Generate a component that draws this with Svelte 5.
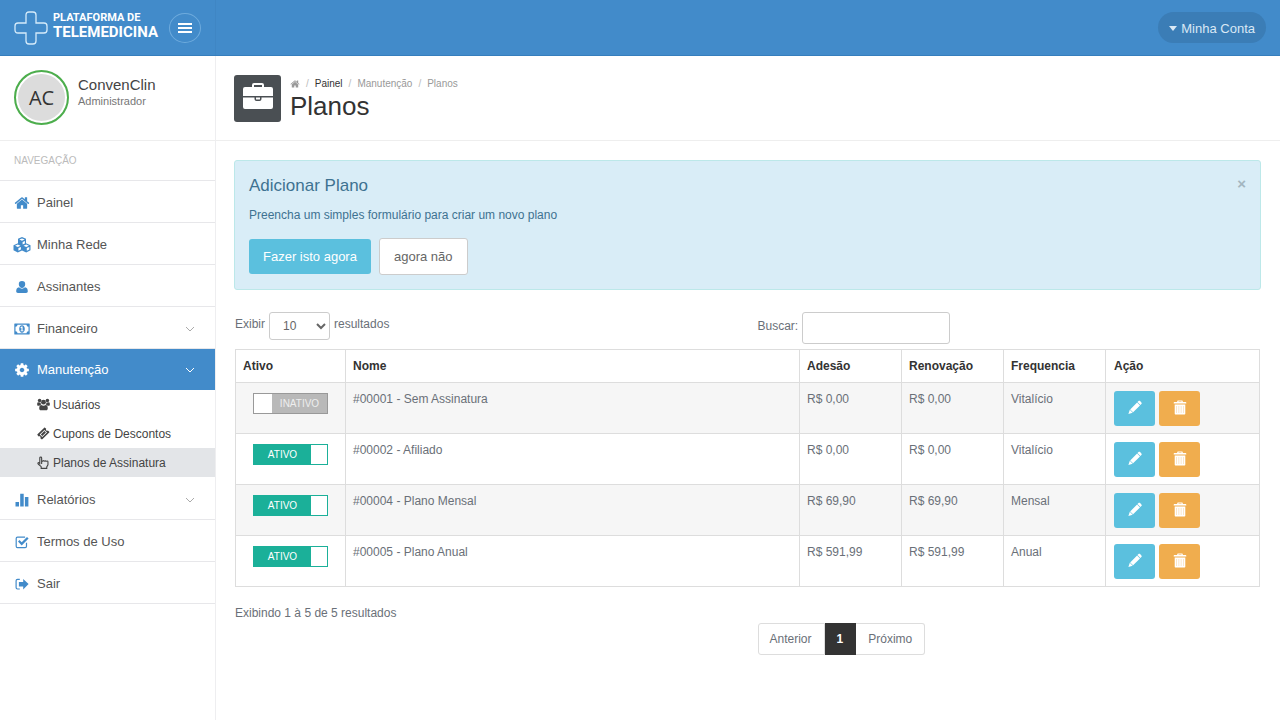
<script lang="ts">
    type Plan = {
        code: string;
        name: string;
        fee: string;
        renewal: string;
        frequency: string;
        active: boolean;
    };

    let plans: Plan[] = $state([
        { code: '#00001', name: 'Sem Assinatura', fee: 'R$ 0,00', renewal: 'R$ 0,00', frequency: 'Vitalício', active: false },
        { code: '#00002', name: 'Afiliado', fee: 'R$ 0,00', renewal: 'R$ 0,00', frequency: 'Vitalício', active: true },
        { code: '#00004', name: 'Plano Mensal', fee: 'R$ 69,90', renewal: 'R$ 69,90', frequency: 'Mensal', active: true },
        { code: '#00005', name: 'Plano Anual', fee: 'R$ 591,99', renewal: 'R$ 591,99', frequency: 'Anual', active: true }
    ]);

    const menu = [
        { label: 'Painel', icon: 'home' },
        { label: 'Minha Rede', icon: 'cubes' },
        { label: 'Assinantes', icon: 'user' },
        { label: 'Financeiro', icon: 'money', more: true },
        {
            label: 'Manutenção',
            icon: 'gear',
            more: true,
            active: true,
            children: [
                { label: 'Usuários', icon: 'users' },
                { label: 'Cupons de Descontos', icon: 'ticket' },
                { label: 'Planos de Assinatura', icon: 'hand', current: true }
            ]
        },
        { label: 'Relatórios', icon: 'chart', more: true },
        { label: 'Termos de Uso', icon: 'check' },
        { label: 'Sair', icon: 'exit' }
    ];

    let showAlert = $state(true);
    let pageSize = $state('10');
    let search = $state('');
</script>

{#snippet icon(name: string)}
    {#if name === 'home'}
        <svg viewBox="0 0 1792 1792" class="icon large"><path d="M1472 992v480q0 26-19 45t-45 19h-384v-384h-256v384h-384q-26 0-45-19t-19-45v-480q0-1 .5-3t.5-3l575-474 575 474q1 2 1 6zm223-69l-62 74q-8 9-21 11h-3q-13 0-21-7l-692-577-692 577q-12 8-24 7-13-2-21-11l-62-74q-8-10-7-23.5t11-21.5l719-599q32-26 76-26t76 26l244 204v-195q0-14 9-23t23-9h192q14 0 23 9t9 23v408l219 182q10 8 11 21.5t-7 23.5z" /></svg>
    {:else if name === 'cubes'}
        <svg viewBox="0 0 18 16" class="icon cubes">
            <path fill-rule="evenodd" d="M9 0l4 1.700v4.600l4.500 1.900v5L13.200 15.500 9 13.600l-4.200 1.900L.5 13.200v-5L5 6.300V1.700zM9 1.500L6.300 2.600 9 3.800l2.700-1.200zM9.600 5v2.600l2.300-1V3.900zM4.800 7.600L2.100 8.700l2.700 1.200 2.700-1.200zM5.400 11v2.800l2.500-1.200V9.900zM13.200 7.600l-2.700 1.100 2.700 1.200 2.700-1.200zM13.800 11v2.800l2.500-1.200V9.900z" />
        </svg>
    {:else if name === 'user'}
        <svg viewBox="0 0 14 14" class="icon"><path d="M7 1a3.200 3.200 0 0 1 3.200 3.300C10.200 6.300 8.800 8 7 8S3.800 6.300 3.800 4.300A3.200 3.200 0 0 1 7 1zM4 7.300a4.300 4.300 0 0 0 6 0c2 .2 2.800 2 2.800 4 0 1.100-.7 1.700-1.700 1.700H2.900c-1 0-1.700-.6-1.700-1.700 0-2 .8-3.800 2.800-4z" /></svg>
    {:else if name === 'money'}
        <svg viewBox="0 0 16 12" class="icon large">
            <path fill-rule="evenodd" d="M.8.5h14.400c.3 0 .5.200.5.500v10c0 .3-.2.500-.5.500H.8A.5.500 0 0 1 .3 11V1C.3.700.5.500.8.500zM3.500 1.700A2 2 0 0 1 1.500 3.700v4.600a2 2 0 0 1 2 2h9a2 2 0 0 1 2-2V3.700a2 2 0 0 1-2-2z" />
            <path fill-rule="evenodd" d="M8 2.300c1.700 0 2.800 1.700 2.800 3.700S9.700 9.700 8 9.700 5.200 8 5.200 6 6.300 2.300 8 2.300zm-.5 1.300L6.300 4.700l.5.600.6-.4v2.500h-.9v.9h3v-.9h-.9V3.600z" />
        </svg>
    {:else if name === 'gear'}
        <svg viewBox="0 0 1792 1792" class="icon large"><path d="M1152 896q0-106-75-181t-181-75-181 75-75 181 75 181 181 75 181-75 75-181zm512-109v222q0 12-8 23t-20 13l-185 28q-19 54-39 91 35 50 107 138 10 12 10 25t-9 23q-27 37-99 108t-94 71q-12 0-26-9l-138-108q-44 23-91 38-16 136-29 186-7 28-36 28h-222q-14 0-24.500-8.500t-11.500-21.500l-28-184q-49-16-90-37l-141 107q-10 9-25 9-14 0-25-11-126-114-165-168-7-10-7-23 0-12 8-23 15-21 51-66.500t54-70.500q-27-50-41-99l-183-27q-13-2-21-12.500t-8-23.500v-222q0-12 8-23t19-13l186-28q14-46 39-92-40-57-107-138-10-12-10-24 0-10 9-23 26-36 98.500-107.500t94.500-71.500q13 0 26 10l138 107q44-23 91-38 16-136 29-186 7-28 36-28h222q14 0 24.500 8.500t11.500 21.500l28 184q49 16 90 37l142-107q9-9 24-9 13 0 25 10 129 119 165 170 7 8 7 22 0 12-8 23-15 21-51 66.500t-54 70.500q26 50 41 98l183 28q13 2 21 12.500t8 23.500z" /></svg>
    {:else if name === 'users'}
        <svg viewBox="0 0 14 13" class="icon">
            <circle cx="2.800" cy="2.200" r="1.900" /><circle cx="11.200" cy="2.200" r="1.900" /><circle cx="7" cy="4" r="2.600" />
            <path d="M.2 5.800C.2 4.700.6 4 1.500 4c.8.500 1.700.500 2.300.300 0 1 .4 1.700.9 2.400-1 0-1.700.500-2.200 1.200H1.400C.6 7.900.2 7.400.2 6.800zM13.800 5.800c0-1.100-.4-1.800-1.300-1.800-.8.500-1.700.500-2.300.300 0 1-.4 1.700-.9 2.400 1 0 1.700.500 2.200 1.200h1.100c.8 0 1.200-.5 1.200-1.100zM4.600 7c1.400 1 3.400 1 4.800 0 1.500 0 2.200 1.700 2.200 3.700 0 1.200-.7 1.900-1.800 1.900H4.200c-1.100 0-1.800-.7-1.800-1.900 0-2 .7-3.700 2.200-3.700z" />
        </svg>
    {:else if name === 'ticket'}
        <svg viewBox="0 0 14 14" class="icon"><path fill-rule="evenodd" d="M8.600.8l1.300 1.200c-.4.600-.3 1.200.1 1.700s1.200.6 1.700.2l1.500 1.300c.2.300.2.600 0 .8l-7.500 7.200c-.3.200-.6.200-.8 0L3.600 12c.4-.6.300-1.200-.1-1.700S2.300 9.700 1.700 10.100L.5 8.700c-.2-.3-.2-.6 0-.8L7.800.8c.2-.2.600-.2.800 0zM8 3.100L2.900 8.200l2.800 2.700 5.100-5.100zM8 4.300l1.600 1.500-3.900 3.900-1.600-1.500z" /></svg>
    {:else if name === 'hand'}
        <svg viewBox="0 0 13 14" class="icon outline"><path d="M4.500 8.500V2.100c0-1.300-2-1.300-2 0V8l-.8-.7C.9 6.700 0 7.700.8 8.600L4 11.500v1.800h6v-1.600l1.300-2.200V6.300c0-1.100-1.700-1.100-1.900-.2-.1-1-1.600-1.200-1.900-.2-.2-1-1.500-1.200-1.800-.3H4.500" /></svg>
    {:else if name === 'chart'}
        <svg viewBox="0 0 14 14" class="icon"><path d="M.5 9h3.500v4.500H.5zM5.200.7h3.500v12.800H5.200zM9.900 4h3.500v9.500H9.900z" /></svg>
    {:else if name === 'check'}
        <svg viewBox="0 0 14 14" class="icon"><path d="M11.500 7.800v3.500c0 .8-.5 1.300-1.300 1.300H2.500c-.8 0-1.300-.5-1.300-1.300V3.500c0-.8.500-1.300 1.300-1.300h7.600" fill="none" stroke="currentColor" stroke-width="1.200" /><path d="M3 6.600l1.500-1.500 2.200 2.200L12 1.900l1.600 1.600-6.900 6.900z" /></svg>
    {:else if name === 'exit'}
        <svg viewBox="0 0 14 14" class="icon"><path d="M4.800 12H2.500c-.8 0-1.400-.6-1.400-1.400V3.700c0-.8.600-1.400 1.400-1.400h2.300" fill="none" stroke="currentColor" stroke-width="1.200" /><path d="M8.200 1.900L13.600 7.100l-5.400 5.300V9.400H3.900V4.900h4.300z" /></svg>
    {:else if name === 'pencil'}
        <svg viewBox="0 0 14 14" class="glyph"><path d="M10.500.6c.5-.5 1.100-.5 1.600 0l1.300 1.300c.5.500.5 1.100 0 1.600l-1 1-2.900-2.900zM9.100 2L12 4.900l-6.900 6.900-2.900-2.900zM1.800 9.300l2.900 2.900-4.300 1.400z" /></svg>
    {:else if name === 'trash'}
        <svg viewBox="0 0 14 15" class="glyph"><path fill-rule="evenodd" d="M5.200.5h3.600c.6 0 1 .4 1 1V2h2.800c.4 0 .7.300.7.700v.9H.7v-.9c0-.4.300-.7.700-.7h2.800v-.5c0-.6.400-1 1-1zm.3 1V2h3v-.5zM1.700 4.500h10.600v9c0 .7-.4 1-1 1H2.700c-.6 0-1-.3-1-1zM3.700 6v7h.3V6zM5.800 6v7h.3V6zM7.900 6v7h.3V6zM10 6v7h.3V6z" /></svg>
    {/if}
{/snippet}

<header class="topbar">
    <div class="brand">
        <a href="#inicio" class="logo">
            <svg viewBox="0 0 34 34" width="34" height="34">
                <path d="M12 4q0-3 3-3h4q3 0 3 3v8h8q3 0 3 3v4q0 3-3 3h-8v8q0 3-3 3h-4q-3 0-3-3v-8H4q-3 0-3-3v-4q0-3 3-3h8z" fill="none" stroke="#d5ebfa" stroke-width="1.300" />
            </svg>
            <span class="logo-text">
                <small>PLATAFORMA DE</small>
                <strong>TELEMEDICINA</strong>
            </span>
        </a>
        <button class="toggle-menu" aria-label="Menu">
            <svg viewBox="0 0 14 12" width="14" height="12"><path d="M0 2h14M0 6h14M0 10h14" stroke="#fff" stroke-width="2" /></svg>
        </button>
    </div>
    <button class="account"><span class="caret"></span>Minha Conta</button>
</header>

<div class="layout">
    <aside class="sidebar">
        <div class="profile">
            <span class="avatar">AC</span>
            <div>
                <div class="profile-name">ConvenClin</div>
                <div class="profile-role">Administrador</div>
            </div>
        </div>
        <h5 class="nav-title">NAVEGAÇÃO</h5>
        <nav>
            {#each menu as item}
                <a href="#{item.icon}" class="nav-item" class:active={item.active}>
                    <span class="nav-icon">{@render icon(item.icon)}</span>
                    <span class="nav-label">{item.label}</span>
                    {#if item.more}
                        <svg viewBox="0 0 8 6" class="chevron"><path d="M0 1l4 4 4-4" fill="none" stroke="currentColor" /></svg>
                    {/if}
                </a>
                {#if item.children}
                    <div class="sub-menu">
                        {#each item.children as child}
                            <a href="#{child.icon}" class="sub-item" class:current={child.current}>
                                {@render icon(child.icon)}{child.label}
                            </a>
                        {/each}
                    </div>
                {/if}
            {/each}
        </nav>
    </aside>

    <main>
        <div class="page-header">
            <span class="page-icon">
                <svg viewBox="0 0 32 28" width="32" height="28">
                    <path fill-rule="evenodd" fill="#fff" d="M10 5V3q0-2 2-2h8q2 0 2 2v2h7q2 0 2 2v7H1V7q0-2 2-2zM12 5h8V3h-8z" />
                    <path fill="#fff" d="M1 15.500h11.500V17q0 2 2 2h3q2 0 2-2v-1.500H31V25q0 2-2 2H3q-2 0-2-2zM14 15.500h4V17q0 .6-.6.600h-2.800q-.6 0-.6-.6z" />
                </svg>
            </span>
            <div>
                <ol class="breadcrumb">
                    <li>{@render icon('home')}</li>
                    <li><a href="#painel">Painel</a></li>
                    <li>Manutenção</li>
                    <li>Planos</li>
                </ol>
                <h1>Planos</h1>
            </div>
        </div>

        <div class="content">
            {#if showAlert}
                <section class="alert">
                    <button class="close" aria-label="Fechar" onclick={() => (showAlert = false)}>×</button>
                    <h4>Adicionar Plano</h4>
                    <p>Preencha um simples formulário para criar um novo plano</p>
                    <div class="alert-actions">
                        <button class="btn info">Fazer isto agora</button>
                        <button class="btn plain" onclick={() => (showAlert = false)}>agora não</button>
                    </div>
                </section>
            {/if}

            <div class="table-area">
                <div class="split controls">
                    <label class="length">
                        Exibir
                        <select bind:value={pageSize}>
                            <option>10</option>
                            <option>25</option>
                            <option>50</option>
                        </select>
                        resultados
                    </label>
                    <label class="search">Buscar: <input type="search" bind:value={search} /></label>
                </div>

                <table>
                    <colgroup>
                        <col class="col-active" />
                        <col />
                        <col class="col-value" />
                        <col class="col-value" />
                        <col class="col-value" />
                        <col class="col-action" />
                    </colgroup>
                    <thead>
                        <tr>
                            <th>Ativo</th>
                            <th>Nome</th>
                            <th>Adesão</th>
                            <th>Renovação</th>
                            <th>Frequencia</th>
                            <th>Ação</th>
                        </tr>
                    </thead>
                    <tbody>
                        {#each plans as plan}
                            <tr>
                                <td>
                                    <label class="switch" class:on={plan.active}>
                                        <input type="checkbox" bind:checked={plan.active} />
                                        <span>{plan.active ? 'ATIVO' : 'INATIVO'}</span>
                                    </label>
                                </td>
                                <td>{plan.code} - {plan.name}</td>
                                <td>{plan.fee}</td>
                                <td>{plan.renewal}</td>
                                <td>{plan.frequency}</td>
                                <td>
                                    <div class="row-actions">
                                        <button class="btn square info" aria-label="Editar">{@render icon('pencil')}</button>
                                        <button class="btn square warning" aria-label="Excluir">{@render icon('trash')}</button>
                                    </div>
                                </td>
                            </tr>
                        {/each}
                    </tbody>
                </table>

                <div class="split footer">
                    <div>Exibindo 1 à 5 de 5 resultados</div>
                    <ul class="pagination">
                        <li><a href="#anterior">Anterior</a></li>
                        <li><a href="#1" class="selected">1</a></li>
                        <li><a href="#proximo">Próximo</a></li>
                    </ul>
                </div>
            </div>
        </div>
    </main>
</div>

<style>
    :global(body) {
        margin: 0;
        background: #fff;
        color: #6a7078;
        font-family: 'Liberation Sans', Arial, sans-serif;
        font-size: 12px;
        line-height: 20px;
    }

    * {
        box-sizing: border-box;
    }

    a {
        color: inherit;
        text-decoration: none;
    }

    button,
    input,
    select {
        font: inherit;
    }

    .icon {
        width: 14px;
        height: 14px;
        fill: currentColor;
        flex: none;
    }

    .icon.large {
        width: 16px;
        height: 16px;
    }

    .icon.cubes {
        width: 18px;
        height: 16px;
    }

    .icon.outline {
        fill: none;
        stroke: currentColor;
        stroke-width: 1.2;
    }

    .topbar {
        display: flex;
        align-items: center;
        justify-content: space-between;
        height: 56px;
        padding-right: 14px;
        background: #428bca;
        border-bottom: 1px solid #357ebd;
    }

    .brand {
        display: flex;
        align-items: center;
        justify-content: space-between;
        align-self: stretch;
        width: 216px;
        padding: 0 14px;
        border-right: 1px solid #3f86c4;
    }

    .logo {
        display: flex;
        align-items: center;
        gap: 5px;
        color: #fff;
    }

    .logo-text {
        display: flex;
        flex-direction: column;
        padding-bottom: 3px;
        font-family: Roboto, sans-serif;
    }

    .logo-text small {
        font-size: 11px;
        font-weight: 700;
        line-height: 12px;
    }

    .logo-text strong {
        font-size: 15px;
        line-height: 16px;
    }

    .toggle-menu {
        display: grid;
        place-items: center;
        width: 32px;
        height: 30px;
        padding: 0;
        border: 1px solid #6eabdd;
        border-radius: 50%;
        background: none;
    }

    .account {
        display: flex;
        align-items: center;
        gap: 4px;
        height: 31px;
        padding: 2px 11px 0;
        border: 0;
        border-radius: 16px;
        background: #3b7db6;
        color: #d9e8f5;
        font-size: 13px;
    }

    .caret {
        border: 4px solid transparent;
        border-top: 5px solid #d9e8f5;
        border-bottom: 0;
    }

    .layout {
        display: flex;
        min-height: calc(100vh - 56px);
    }

    .sidebar {
        flex: none;
        width: 216px;
        border-right: 1px solid #eeeef0;
    }

    .profile {
        display: flex;
        gap: 9px;
        height: 85px;
        padding: 14px;
        border-bottom: 1px solid #eee;
    }

    .avatar {
        display: grid;
        place-items: center;
        width: 55px;
        height: 55px;
        border: 2px solid #4cae4c;
        border-radius: 50%;
        background: #dcdcdc;
        box-shadow: inset 0 0 0 2px #fff;
        color: #333;
        font-family: 'Open Sans', sans-serif;
        font-size: 20px;
    }

    .profile-name {
        padding-top: 5px;
        color: #444;
        font-size: 15px;
    }

    .profile-role {
        color: #777;
        font-size: 11px;
        line-height: 12px;
    }

    .nav-title {
        margin: 0;
        padding: 10px 14px 9px;
        border-bottom: 1px solid #e7e7ea;
        color: #bbb;
        font-size: 10px;
        font-weight: 400;
    }

    .nav-item {
        display: flex;
        align-items: center;
        height: 42px;
        padding: 2px 21px 0 13px;
        border-bottom: 1px solid #e7e7ea;
        color: #555;
        font-size: 13px;
    }

    .nav-item.active {
        height: 41px;
        background: #428bca;
        border-color: #428bca;
        color: #fff;
    }

    .nav-icon {
        display: flex;
        justify-content: center;
        width: 18px;
        margin-right: 6px;
        color: #428bca;
    }

    .active .nav-icon {
        color: #fff;
    }

    .nav-label {
        flex: 1;
    }

    .chevron {
        width: 8px;
        height: 6px;
        color: #aaa;
    }

    .active .chevron {
        color: #fff;
    }

    .sub-menu {
        padding-bottom: 1px;
    }

    .sub-item {
        display: flex;
        align-items: center;
        gap: 3px;
        height: 29px;
        padding-left: 37px;
        color: #444;
    }

    .sub-item .icon {
        width: 13px;
        height: 13px;
    }

    .sub-item.current {
        background: #e3e5e8;
    }

    main {
        flex: 1;
        min-width: 0;
    }

    .page-header {
        display: flex;
        gap: 9px;
        height: 85px;
        padding: 19px 18px;
        border-bottom: 1px solid #eee;
    }

    .page-icon {
        display: grid;
        place-items: center;
        width: 47px;
        height: 47px;
        padding-bottom: 6px;
        border-radius: 3px;
        background: #4a4f53;
    }

    .breadcrumb {
        display: flex;
        align-items: center;
        margin: 0;
        padding: 0;
        color: #999;
        font-size: 10px;
        line-height: 18px;
        list-style: none;
    }

    .breadcrumb li {
        display: flex;
        align-items: center;
    }

    .breadcrumb li + li::before {
        content: '/';
        padding: 0 6px;
        color: #bbb;
    }

    .breadcrumb a {
        color: #333;
    }

    .breadcrumb .icon {
        width: 10px;
        height: 10px;
    }

    h1 {
        margin: 0;
        color: #333;
        font-size: 26px;
        font-weight: 400;
        line-height: 26px;
    }

    .content {
        padding: 19px 19px 40px 18px;
    }

    .alert {
        padding: 14px;
        border: 1px solid #bce8e9;
        border-radius: 3px;
        background: #d9edf7;
        color: #3e7291;
    }

    .alert h4 {
        margin: 0 0 8px;
        font-size: 17px;
        font-weight: 400;
        line-height: 22px;
    }

    .alert p {
        margin: 0 0 13px;
    }

    .close {
        float: right;
        padding: 0;
        border: 0;
        background: none;
        color: #a3b6c0;
        font-size: 15px;
        font-weight: 700;
        line-height: 17px;
    }

    .alert-actions {
        display: flex;
        align-items: center;
        gap: 8px;
    }

    .row-actions {
        display: flex;
        gap: 4px;
    }

    .btn {
        height: 35px;
        padding: 0 14px;
        border: 0;
        border-radius: 3px;
        color: #fff;
        font-size: 13px;
        cursor: pointer;
    }

    .btn.info {
        background: #5bc0de;
    }

    .btn.warning {
        background: #f0ad4e;
    }

    .btn.plain {
        height: 37px;
        border: 1px solid #ccc;
        background: #fff;
        color: #666;
    }

    .btn.square {
        width: 41px;
        padding: 0 0 3px;
    }

    .glyph {
        display: block;
        width: 14px;
        height: 15px;
        margin: 0 auto;
        fill: #fff;
    }

    .table-area {
        padding: 22px 1px 0;
    }

    .split {
        display: grid;
        grid-template-columns: 1fr 1fr;
        gap: 20px;
    }

    .controls {
        align-items: start;
        height: 37px;
    }

    .length,
    .search {
        display: flex;
        align-items: flex-start;
        gap: 4px;
        line-height: 24px;
    }

    .search {
        line-height: 28px;
    }

    .length select {
        width: 61px;
        height: 28px;
        padding: 0 0 0 9px;
        border: 1px solid #ccc;
        border-radius: 3px;
        background: #fff;
        color: #666;
    }

    .search input {
        width: 148px;
        height: 32px;
        border: 1px solid #ccc;
        border-radius: 3px;
        background: #fff;
    }

    table {
        width: 100%;
        border-collapse: collapse;
        table-layout: fixed;
    }

    .col-active {
        width: 110px;
    }

    .col-value {
        width: 102px;
    }

    .col-action {
        width: 154px;
    }

    th,
    td {
        padding: 6px 7px;
        border: 1px solid #ddd;
        text-align: left;
        vertical-align: top;
    }

    th:last-child,
    td:last-child {
        padding-left: 8px;
    }

    th {
        color: #333;
    }

    td {
        height: 51px;
    }

    td:last-child {
        padding-top: 8px;
    }

    tbody tr:nth-child(odd) {
        background: #f6f6f6;
    }

    .switch {
        display: flex;
        width: 75px;
        height: 21px;
        margin: 4px 0 0 10px;
        border: 1px solid #999;
        background: #b9b9b9;
        color: #eee;
        font-size: 10px;
        line-height: 19px;
        text-align: center;
    }

    .switch.on {
        flex-direction: row-reverse;
        border-color: #1bb099;
        background: #1bb099;
        color: #fff;
    }

    .switch input {
        appearance: none;
        width: 18px;
        height: 19px;
        margin: 0;
        background: #fff;
    }

    .switch.on input {
        width: 16px;
    }

    .switch span {
        flex: 1;
    }

    .footer {
        padding-top: 16px;
    }

    .pagination {
        display: flex;
        margin: 20px 0 0;
        padding: 0;
        list-style: none;
    }

    .pagination a {
        display: block;
        padding: 5px 12px;
        border: 1px solid #ddd;
        border-left: 0;
    }

    .pagination li:first-child a {
        padding-left: 11px;
        border-left: 1px solid #ddd;
        border-radius: 3px 0 0 3px;
    }

    .pagination li:last-child a {
        border-radius: 0 3px 3px 0;
    }

    .pagination .selected {
        border-color: #333;
        background: #333;
        color: #fff;
        font-weight: 700;
    }
</style>
